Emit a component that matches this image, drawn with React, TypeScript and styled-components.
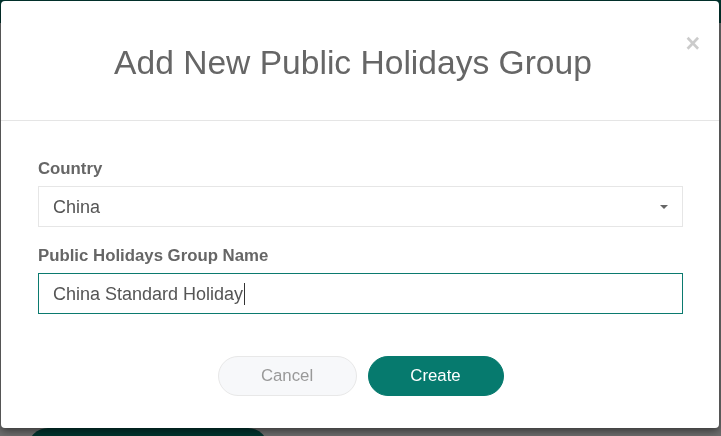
import React from "react";
import styled, { createGlobalStyle } from "styled-components";

const GlobalStyle = createGlobalStyle`
  html, body { margin: 0; padding: 0; }
  body {
    font-family: "Liberation Sans", Arial, sans-serif;
    background: #6e6e6e;
    overflow: hidden;
  }
  * { box-sizing: border-box; }
`;

const Backdrop = styled.div`
  height: 100vh;
  display: flex;
  flex-direction: column;
  background: #6e6e6e;
  overflow: hidden;
`;

const BgHeader = styled.div`
  height: 23px;
  background: #02352f;
`;

const BgContent = styled.div`
  flex: 1;
`;

const BgFooter = styled.div`
  display: flex;
  padding-left: 28px;
  height: 8px;
  overflow: hidden;
`;

const BgButton = styled.div`
  width: 240px;
  height: 40px;
  border-radius: 20px;
  background: #02352f;
`;

const Modal = styled.div`
  position: fixed;
  left: 1px;
  top: 1px;
  width: 718px;
  height: 427px;
  background: #fff;
  border-radius: 4px;
  box-shadow: 0 3px 9px rgba(0, 0, 0, 0.5);
  display: flex;
  flex-direction: column;
`;

const Header = styled.div`
  position: relative;
  height: 120px;
  border-bottom: 1px solid #e5e5e5;
  display: flex;
  align-items: center;
  justify-content: center;
  padding: 6px 14px 0 0;
`;

const Title = styled.h4`
  margin: 0;
  font-size: 33.6px;
  font-weight: normal;
  color: #666;
  line-height: 1.1;
`;

const Close = styled.button`
  position: absolute;
  right: 19px;
  top: 30px;
  border: 0;
  background: transparent;
  padding: 0;
  font-family: "Liberation Sans", Arial, sans-serif;
  font-size: 25px;
  font-weight: bold;
  line-height: 1;
  color: #000;
  opacity: 0.2;
  cursor: pointer;
`;

const Body = styled.div`
  padding: 38px 36px 0 37px;
  display: flex;
  flex-direction: column;
`;

const Group = styled.div`
  display: flex;
  flex-direction: column;
  margin-bottom: 19px;
`;

const Label = styled.label`
  font-size: 16.8px;
  line-height: 20px;
  font-weight: bold;
  color: #666;
  margin-bottom: 7px;
`;

const Field = styled.div<{ $focused?: boolean }>`
  height: 41px;
  border: 1px solid ${(p) => (p.$focused ? "#0b7a6f" : "#e6e6e6")};
  padding: 0 14px;
  display: flex;
  align-items: center;
  font-size: 18px;
  color: #555;
  background: #fff;
`;

const FieldText = styled.span`
  flex: 1;
  display: flex;
  align-items: center;
  padding-top: 1px;
`;

const Caret = styled.span`
  display: inline-block;
  width: 1px;
  height: 22px;
  background: #333;
  margin-left: 1px;
`;

const Arrow = styled.span`
  width: 0;
  height: 0;
  border-left: 4.5px solid transparent;
  border-right: 4.5px solid transparent;
  border-top: 4.5px solid #666;
`;

const Footer = styled.div`
  display: flex;
  justify-content: center;
  gap: 11px;
  margin-top: 23px;
`;

const Button = styled.button<{ $primary?: boolean }>`
  height: 40px;
  width: ${(p) => (p.$primary ? "136px" : "139px")};
  border-radius: 20px;
  font-family: "Liberation Sans", Arial, sans-serif;
  font-size: 16.8px;
  border: 1px solid ${(p) => (p.$primary ? "#067a6e" : "#e8e8e8")};
  background: ${(p) => (p.$primary ? "#067a6e" : "#f7f8fa")};
  color: ${(p) => (p.$primary ? "#fff" : "#999")};
  cursor: pointer;
`;

export default function App() {
  return (
    <>
      <GlobalStyle />
      <Backdrop>
        <BgHeader />
        <BgContent />
        <BgFooter>
          <BgButton />
        </BgFooter>
      </Backdrop>
      <Modal role="dialog">
        <Header>
          <Title>Add New Public Holidays Group</Title>
          <Close aria-label="Close">×</Close>
        </Header>
        <Body>
          <Group>
            <Label>Country</Label>
            <Field>
              <FieldText>China</FieldText>
              <Arrow />
            </Field>
          </Group>
          <Group>
            <Label>Public Holidays Group Name</Label>
            <Field $focused role="textbox">
              <FieldText>
                China Standard Holiday
                <Caret />
              </FieldText>
            </Field>
          </Group>
          <Footer>
            <Button>Cancel</Button>
            <Button $primary>Create</Button>
          </Footer>
        </Body>
      </Modal>
    </>
  );
}
